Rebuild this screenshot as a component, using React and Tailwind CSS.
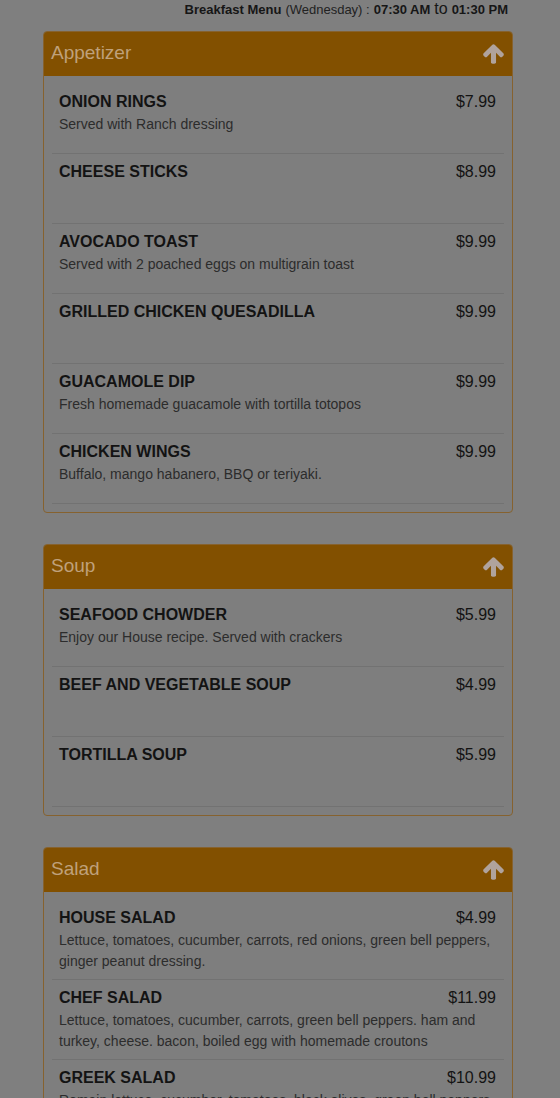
import React from "react";

const sections = [
  {
    name: "Appetizer",
    items: [
      { title: "ONION RINGS", price: "$7.99", desc: "Served with Ranch dressing" },
      { title: "CHEESE STICKS", price: "$8.99", desc: "" },
      { title: "AVOCADO TOAST", price: "$9.99", desc: "Served with 2 poached eggs on multigrain toast" },
      { title: "GRILLED CHICKEN QUESADILLA", price: "$9.99", desc: "" },
      { title: "GUACAMOLE DIP", price: "$9.99", desc: "Fresh homemade guacamole with tortilla totopos" },
      { title: "CHICKEN WINGS", price: "$9.99", desc: "Buffalo, mango habanero, BBQ or teriyaki." },
    ],
  },
  {
    name: "Soup",
    items: [
      { title: "SEAFOOD CHOWDER", price: "$5.99", desc: "Enjoy our House recipe. Served with crackers" },
      { title: "BEEF AND VEGETABLE SOUP", price: "$4.99", desc: "" },
      { title: "TORTILLA SOUP", price: "$5.99", desc: "" },
    ],
  },
  {
    name: "Salad",
    items: [
      {
        title: "HOUSE SALAD",
        price: "$4.99",
        desc: "Lettuce, tomatoes, cucumber, carrots, red onions, green bell peppers, ginger peanut dressing.",
      },
      {
        title: "CHEF SALAD",
        price: "$11.99",
        desc: "Lettuce, tomatoes, cucumber, carrots, green bell peppers. ham and turkey, cheese. bacon, boiled egg with homemade croutons",
      },
      {
        title: "GREEK SALAD",
        price: "$10.99",
        desc: "Romain lettuce, cucumber, tomatoes, black olives, green bell peppers, feta cheese and greek dressing.",
      },
    ],
  },
];

// old-style thick up arrow
const ArrowUp = () => (
  <svg viewBox="40 40 1584 1498" className="h-[20px] w-[21px]" fill="#b0a39d">
    <path d="M1611 832q0 53-37 90l-75 75q-38 38-91 38-54 0-90-38l-294-293v704q0 52-37.5 84.5t-90.5 32.5h-128q-53 0-90.5-32.5t-37.5-84.5v-704l-294 293q-36 38-90 38t-90-38l-75-75q-38-38-38-90 0-53 38-91l651-651q35-37 90-37 54 0 91 37l651 651q37 39 37 91z" />
  </svg>
);

const MenuItem = ({ item }) => (
  <div className="min-h-[70px] border-b border-[#727272] pl-[7px] pr-[8px] pt-[7px] pb-[7px]">
    <div className="flex justify-between text-[16px] leading-[22px] text-[#131313]">
      <span className="font-bold">{item.title}</span>
      <span>{item.price}</span>
    </div>
    {item.desc && (
      <p className="mt-px text-[14px] leading-[21px] text-[#2c2c2c]">{item.desc}</p>
    )}
  </div>
);

const Section = ({ section }) => (
  <div className="mb-[31px] rounded-[4px] border border-[#86622f] bg-[#7e7e7e]">
    <div className="flex h-[44px] items-center justify-between rounded-t-[3px] bg-[#825000] pl-[7px] pr-[8px]">
      <span className="-mt-[2px] text-[19px] text-[#bfa17b]">{section.name}</span>
      <ArrowUp />
    </div>
    <div className="px-[8px] pt-[8px] pb-[8px]">
      {section.items.map((item) => (
        <MenuItem key={item.title} item={item} />
      ))}
    </div>
  </div>
);

export default function App() {
  return (
    <div
      className="min-h-screen bg-[#7f7f7f]"
      style={{ fontFamily: '"Liberation Sans", Arial, sans-serif' }}
    >
      <div className="ml-[43px] w-[470px]">
        <div className="flex h-[19px] items-center justify-end gap-[4px] pr-[5px] pt-px text-[13px] text-[#161616]">
          <span className="font-bold">Breakfast Menu</span>
          <span className="text-[#222]">(Wednesday) :</span>
          <span className="font-bold">07:30 AM</span>
          <span className="-mt-[3px] text-[16px] leading-[16px]">to</span>
          <span className="font-bold">01:30 PM</span>
        </div>
        <div className="mt-[12px]">
          {sections.map((s) => (
            <Section key={s.name} section={s} />
          ))}
        </div>
      </div>
    </div>
  );
}
